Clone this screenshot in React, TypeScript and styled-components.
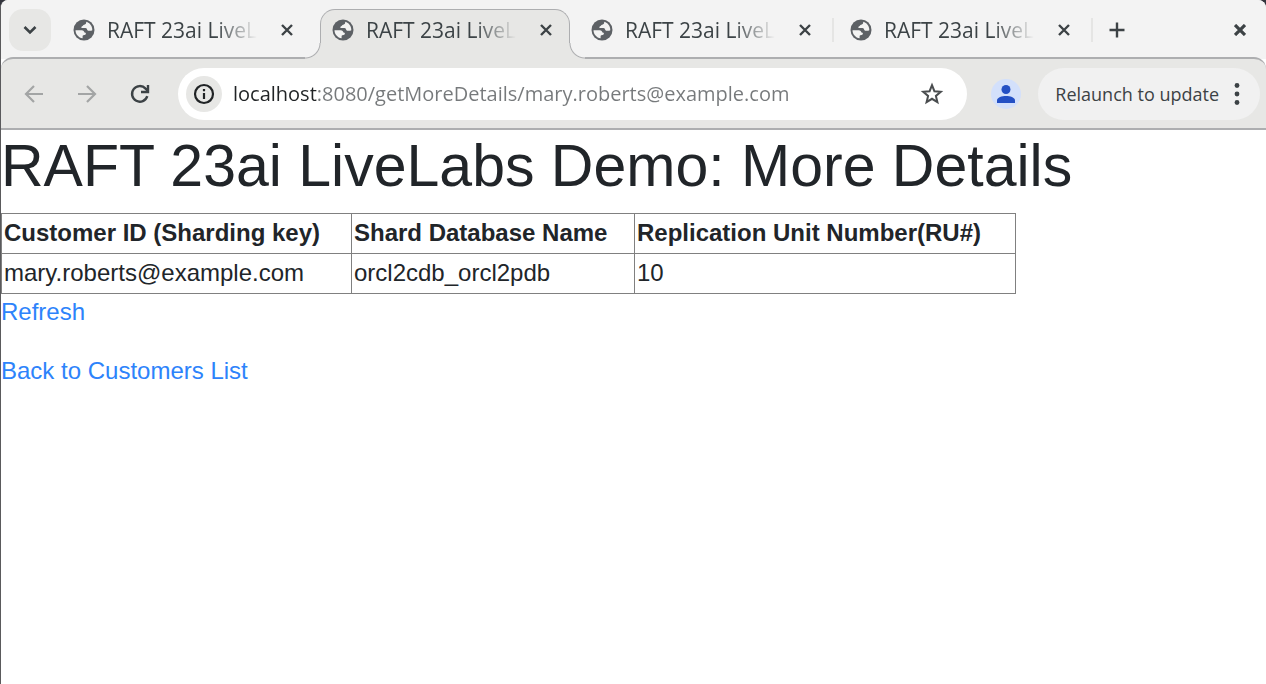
import React from "react";
import styled, { createGlobalStyle, css } from "styled-components";

const colors = {
  strip: "#f3f3f3",
  bar: "#e7e7e5",
  line: "#adaeb0",
  icon: "#3c4245",
  tabText: "#3c4346",
};

const GlobalStyle = createGlobalStyle`
  * { box-sizing: border-box; }
  body { margin: 0; background: #33353d; }
  button { border: 0; padding: 0; background: none; font: inherit; color: inherit; cursor: pointer; }
`;

const BrowserWindow = styled.div`
  display: flex;
  flex-direction: column;
  min-height: 100vh;
  border-left: 1px solid #5a5a5c;
  border-radius: 8px 8px 0 0;
  background: #fff;
  overflow: hidden;
  font-family: "Open Sans", "Noto Sans", sans-serif;
`;

const TabStrip = styled.header`
  display: flex;
  align-items: center;
  height: 59px;
  padding: 0 12px 0 8px;
  background: ${colors.strip};
  color: ${colors.icon};
`;

const IconButton = styled.button<{ $size?: number; $round?: boolean }>`
  display: flex;
  flex: none;
  align-items: center;
  justify-content: center;
  width: ${(p) => p.$size ?? 28}px;
  height: ${(p) => p.$size ?? 28}px;
  border-radius: ${(p) => (p.$round ? "50%" : "14px")};
`;

const TabSearch = styled(IconButton)`
  background: ${colors.bar};
`;

const TabList = styled.div`
  display: flex;
  flex: 0 1 1027px;
  gap: 9px;
  min-width: 0;
  height: 100%;
  margin-left: 10px;
`;

const TabItem = styled.div<{ $active?: boolean; $divided?: boolean }>`
  position: relative;
  display: flex;
  flex: 1 1 0;
  align-items: center;
  min-width: 0;
  height: 50px;
  margin-top: 9px;
  padding: 0 9px 10px 11px;
  border: 1px solid transparent;
  border-bottom: 0;

  ${(p) =>
    p.$divided &&
    css`
      &::after {
        content: "";
        position: absolute;
        top: 8px;
        right: -6px;
        width: 2px;
        height: 24px;
        background: #e5e5e4;
      }
    `}

  ${(p) =>
    p.$active &&
    css`
      z-index: 1;
      background: ${colors.bar};
      border-color: ${colors.line};
      border-radius: 15px 15px 0 0;

      &::before,
      &::after {
        content: "";
        position: absolute;
        bottom: 0;
        width: 16px;
        height: 16px;
      }
      &::before {
        left: -16px;
        background: radial-gradient(circle at 0 0, ${colors.strip} 14px, ${colors.line} 15px, ${colors.bar} 16px);
      }
      &::after {
        right: -16px;
        background: radial-gradient(circle at 100% 0, ${colors.strip} 14px, ${colors.line} 15px, ${colors.bar} 16px);
      }
    `}
`;

const TabButton = styled.button`
  display: flex;
  flex: 1;
  align-items: center;
  gap: 12px;
  min-width: 0;
  height: 100%;
  color: ${colors.tabText};
`;

const TabTitle = styled.span`
  overflow: hidden;
  font-size: 21px;
  line-height: 28px;
  text-align: left;
  white-space: nowrap;
  mask-image: linear-gradient(90deg, #000 calc(100% - 42px), transparent);
`;

const NewTab = styled(IconButton)`
  margin-left: 15px;
`;

const CloseWindow = styled(IconButton)`
  margin-left: auto;
`;

const Toolbar = styled.nav`
  display: flex;
  align-items: center;
  height: 73px;
  margin-top: -2px;
  padding: 0 6px 0 19px;
  background: ${colors.bar};
  border-top: 2px solid ${colors.line};
  border-bottom: 2px solid ${colors.line};
  border-radius: 12px 12px 0 0;
  color: ${colors.icon};
`;

const ToolbarGroup = styled.div`
  display: flex;
  gap: 25px;
`;

const AddressBar = styled.form`
  display: flex;
  flex: 1;
  align-items: center;
  height: 52px;
  margin-left: 24px;
  padding: 0 21px 0 8px;
  border-radius: 26px;
  background: #fff;
`;

const SiteInfo = styled(IconButton)`
  background: ${colors.bar};
  color: #202325;
`;

const AddressInput = styled.input`
  flex: 1;
  min-width: 0;
  height: 32px;
  margin: 0 12px 0 11px;
  padding: 0;
  border: 0;
  outline: 0;
  background: linear-gradient(90deg, #202325 84px, #76797b 84px) text;
  color: transparent;
  font-family: inherit;
  font-size: 20px;
`;

const Profile = styled(IconButton)`
  margin: 0 17px 0 24px;
  background: #d3e0fb;
  color: #2450c4;
`;

const RelaunchButton = styled.button`
  display: flex;
  flex: none;
  align-items: center;
  gap: 8px;
  height: 52px;
  padding: 0 13px 0 17px;
  border-radius: 26px;
  background: #f1f1f1;
  font-size: 18px;
  white-space: nowrap;
`;

const Page = styled.main`
  flex: 1;
  background: #fff;
  color: #212529;
  font-family: "Liberation Sans", Arial, sans-serif;
  font-size: 24px;
  line-height: 36px;
`;

const Title = styled.h1`
  margin: 0 0 10px;
  font-size: 59px;
  font-weight: 400;
  line-height: 73px;
`;

const DetailsTable = styled.table`
  border-collapse: collapse;
  color: #212529;

  th,
  td {
    height: 40px;
    padding: 0 2px 2px;
    border: 1px solid #808080;
    text-align: left;
  }
`;

const Column = styled.col<{ $width: number }>`
  width: ${(p) => p.$width}px;
`;

const Links = styled.div`
  display: flex;
  flex-direction: column;
  align-items: flex-start;
  gap: 23px;
`;

const PageLink = styled.a`
  color: #2d83fb;
  text-decoration: none;
`;

const GlobeIcon = () => (
  <svg width="22" height="22" viewBox="0 0 22 22" fill="none" aria-hidden="true">
    <circle cx="11" cy="11" r="10.500" fill="#5d6165" />
    <path
      d="M13.200 2.800c.2 1.500-.4 2.700-2 2.900-1.300.1-1 1.500-2.300 1.700-.8.200-.8 1.400 0 1.600h3.600c1.200 0 1.300 1 1.800 1.900.5.900 1.500 1 2.600.8 1-.2 1.700.2 2.400-.4.2-4-2.400-7.500-6.100-8.500Z"
      fill="#f3f3f2"
    />
    <path
      d="M2.500 11.200h6.200c1.700 0 2.500 1 2.700 2.400.7.200 1.500.1 1.500.9 0 1.300-1 1.700-2.300 1.700-.9 0-1 .7-1 1.500v1.600c-4-.6-7-4-7.100-8.100Z"
      fill="#f3f3f2"
    />
  </svg>
);

const CloseIcon = ({ weight = 2.4 }: { weight?: number }) => (
  <svg width="12" height="12" viewBox="0 0 12 12" stroke="currentColor" strokeWidth={weight} aria-hidden="true">
    <path d="m1 1 10 10m0-10L1 11" />
  </svg>
);

const ArrowIcon = ({ forward = false }: { forward?: boolean }) => (
  <svg width="20" height="20" viewBox="0 0 20 20" fill="none" stroke="#a3a5a5" strokeWidth="2.200" aria-hidden="true">
    <path d={forward ? "M1 10h17M10 2l8 8-8 8" : "M19 10H2m8-8-8 8 8 8"} />
  </svg>
);

const tabs = [
  { id: 1, active: false, divided: false },
  { id: 2, active: true, divided: false },
  { id: 3, active: false, divided: true },
  { id: 4, active: false, divided: true },
];

const columns = [
  { label: "Customer ID (Sharding key)", value: "mary.roberts@example.com", width: 350 },
  { label: "Shard Database Name", value: "orcl2cdb_orcl2pdb", width: 283 },
  { label: "Replication Unit Number(RU#)", value: "10", width: 381 },
];

export default function App() {
  return (
    <>
      <GlobalStyle />
      <BrowserWindow>
        <TabStrip>
          <TabSearch $size={42} aria-label="Search tabs">
            <svg width="14" height="10" viewBox="0 0 14 10" fill="none" stroke="currentColor" strokeWidth="2.600" aria-hidden="true">
              <path d="m1.500 2 5.500 5.500L12.500 2" />
            </svg>
          </TabSearch>
          <TabList role="tablist">
            {tabs.map((tab) => (
              <TabItem key={tab.id} $active={tab.active} $divided={tab.divided}>
                <TabButton role="tab" aria-selected={tab.active}>
                  <GlobeIcon />
                  <TabTitle>RAFT 23ai LiveL</TabTitle>
                </TabButton>
                <IconButton aria-label="Close tab" $round>
                  <CloseIcon />
                </IconButton>
              </TabItem>
            ))}
          </TabList>
          <NewTab aria-label="New tab">
            <svg width="16" height="16" viewBox="0 0 16 16" stroke="currentColor" strokeWidth="2.400" aria-hidden="true">
              <path d="M8 .5v15M.5 8h15" />
            </svg>
          </NewTab>
          <CloseWindow aria-label="Close window">
            <CloseIcon weight={3.2} />
          </CloseWindow>
        </TabStrip>

        <Toolbar>
          <ToolbarGroup>
            <IconButton aria-label="Back">
              <ArrowIcon />
            </IconButton>
            <IconButton aria-label="Forward">
              <ArrowIcon forward />
            </IconButton>
            <IconButton aria-label="Reload">
              <svg width="20" height="20" viewBox="0 0 20 20" fill="none" stroke="currentColor" strokeWidth="2.400" aria-hidden="true">
                <path d="M17.300 12.200A7.800 7.800 0 1 1 15.600 4.600L18 7M18 1v7h-7" />
              </svg>
            </IconButton>
          </ToolbarGroup>
          <AddressBar onSubmit={(e) => e.preventDefault()}>
            <SiteInfo type="button" $size={36} $round aria-label="Site information">
              <svg width="22" height="22" viewBox="0 0 22 22" fill="none" stroke="currentColor" strokeWidth="2.200" aria-hidden="true">
                <circle cx="11" cy="11" r="9" />
                <path d="M11 10v6M11 6v2.300" />
              </svg>
            </SiteInfo>
            <AddressInput
              aria-label="Address"
              spellCheck={false}
              defaultValue="localhost:8080/getMoreDetails/mary.roberts@example.com"
            />
            <IconButton type="button" aria-label="Bookmark this page">
              <svg width="24" height="24" viewBox="0 0 24 24" fill="none" stroke="#4a4d4f" strokeWidth="2" aria-hidden="true">
                <path d="m12 3.200 2.400 6 6.400.5-4.900 4.200 1.500 6.300-5.400-3.400-5.400 3.400 1.500-6.300-4.900-4.200 6.400-.5Z" />
              </svg>
            </IconButton>
          </AddressBar>
          <Profile $size={30} $round aria-label="Profile">
            <svg width="18" height="18" viewBox="0 0 18 18" fill="currentColor" aria-hidden="true">
              <circle cx="9" cy="4.500" r="4.500" />
              <path d="M0 18v-2.600C0 12.300 5 11 9 11s9 1.300 9 4.400V18Z" />
            </svg>
          </Profile>
          <RelaunchButton>
            Relaunch to update
            <svg width="20" height="22" viewBox="0 0 20 22" fill="currentColor" aria-hidden="true">
              <circle cx="10" cy="2.500" r="2.400" />
              <circle cx="10" cy="11" r="2.400" />
              <circle cx="10" cy="19.500" r="2.400" />
            </svg>
          </RelaunchButton>
        </Toolbar>

        <Page>
          <Title>RAFT 23ai LiveLabs Demo: More Details</Title>
          <DetailsTable>
            <colgroup>
              {columns.map((c) => (
                <Column key={c.label} $width={c.width} />
              ))}
            </colgroup>
            <thead>
              <tr>
                {columns.map((c) => (
                  <th key={c.label} scope="col">
                    {c.label}
                  </th>
                ))}
              </tr>
            </thead>
            <tbody>
              <tr>
                {columns.map((c) => (
                  <td key={c.label}>{c.value}</td>
                ))}
              </tr>
            </tbody>
          </DetailsTable>
          <Links>
            <PageLink href="#refresh">Refresh</PageLink>
            <PageLink href="#customers">Back to Customers List</PageLink>
          </Links>
        </Page>
      </BrowserWindow>
    </>
  );
}
